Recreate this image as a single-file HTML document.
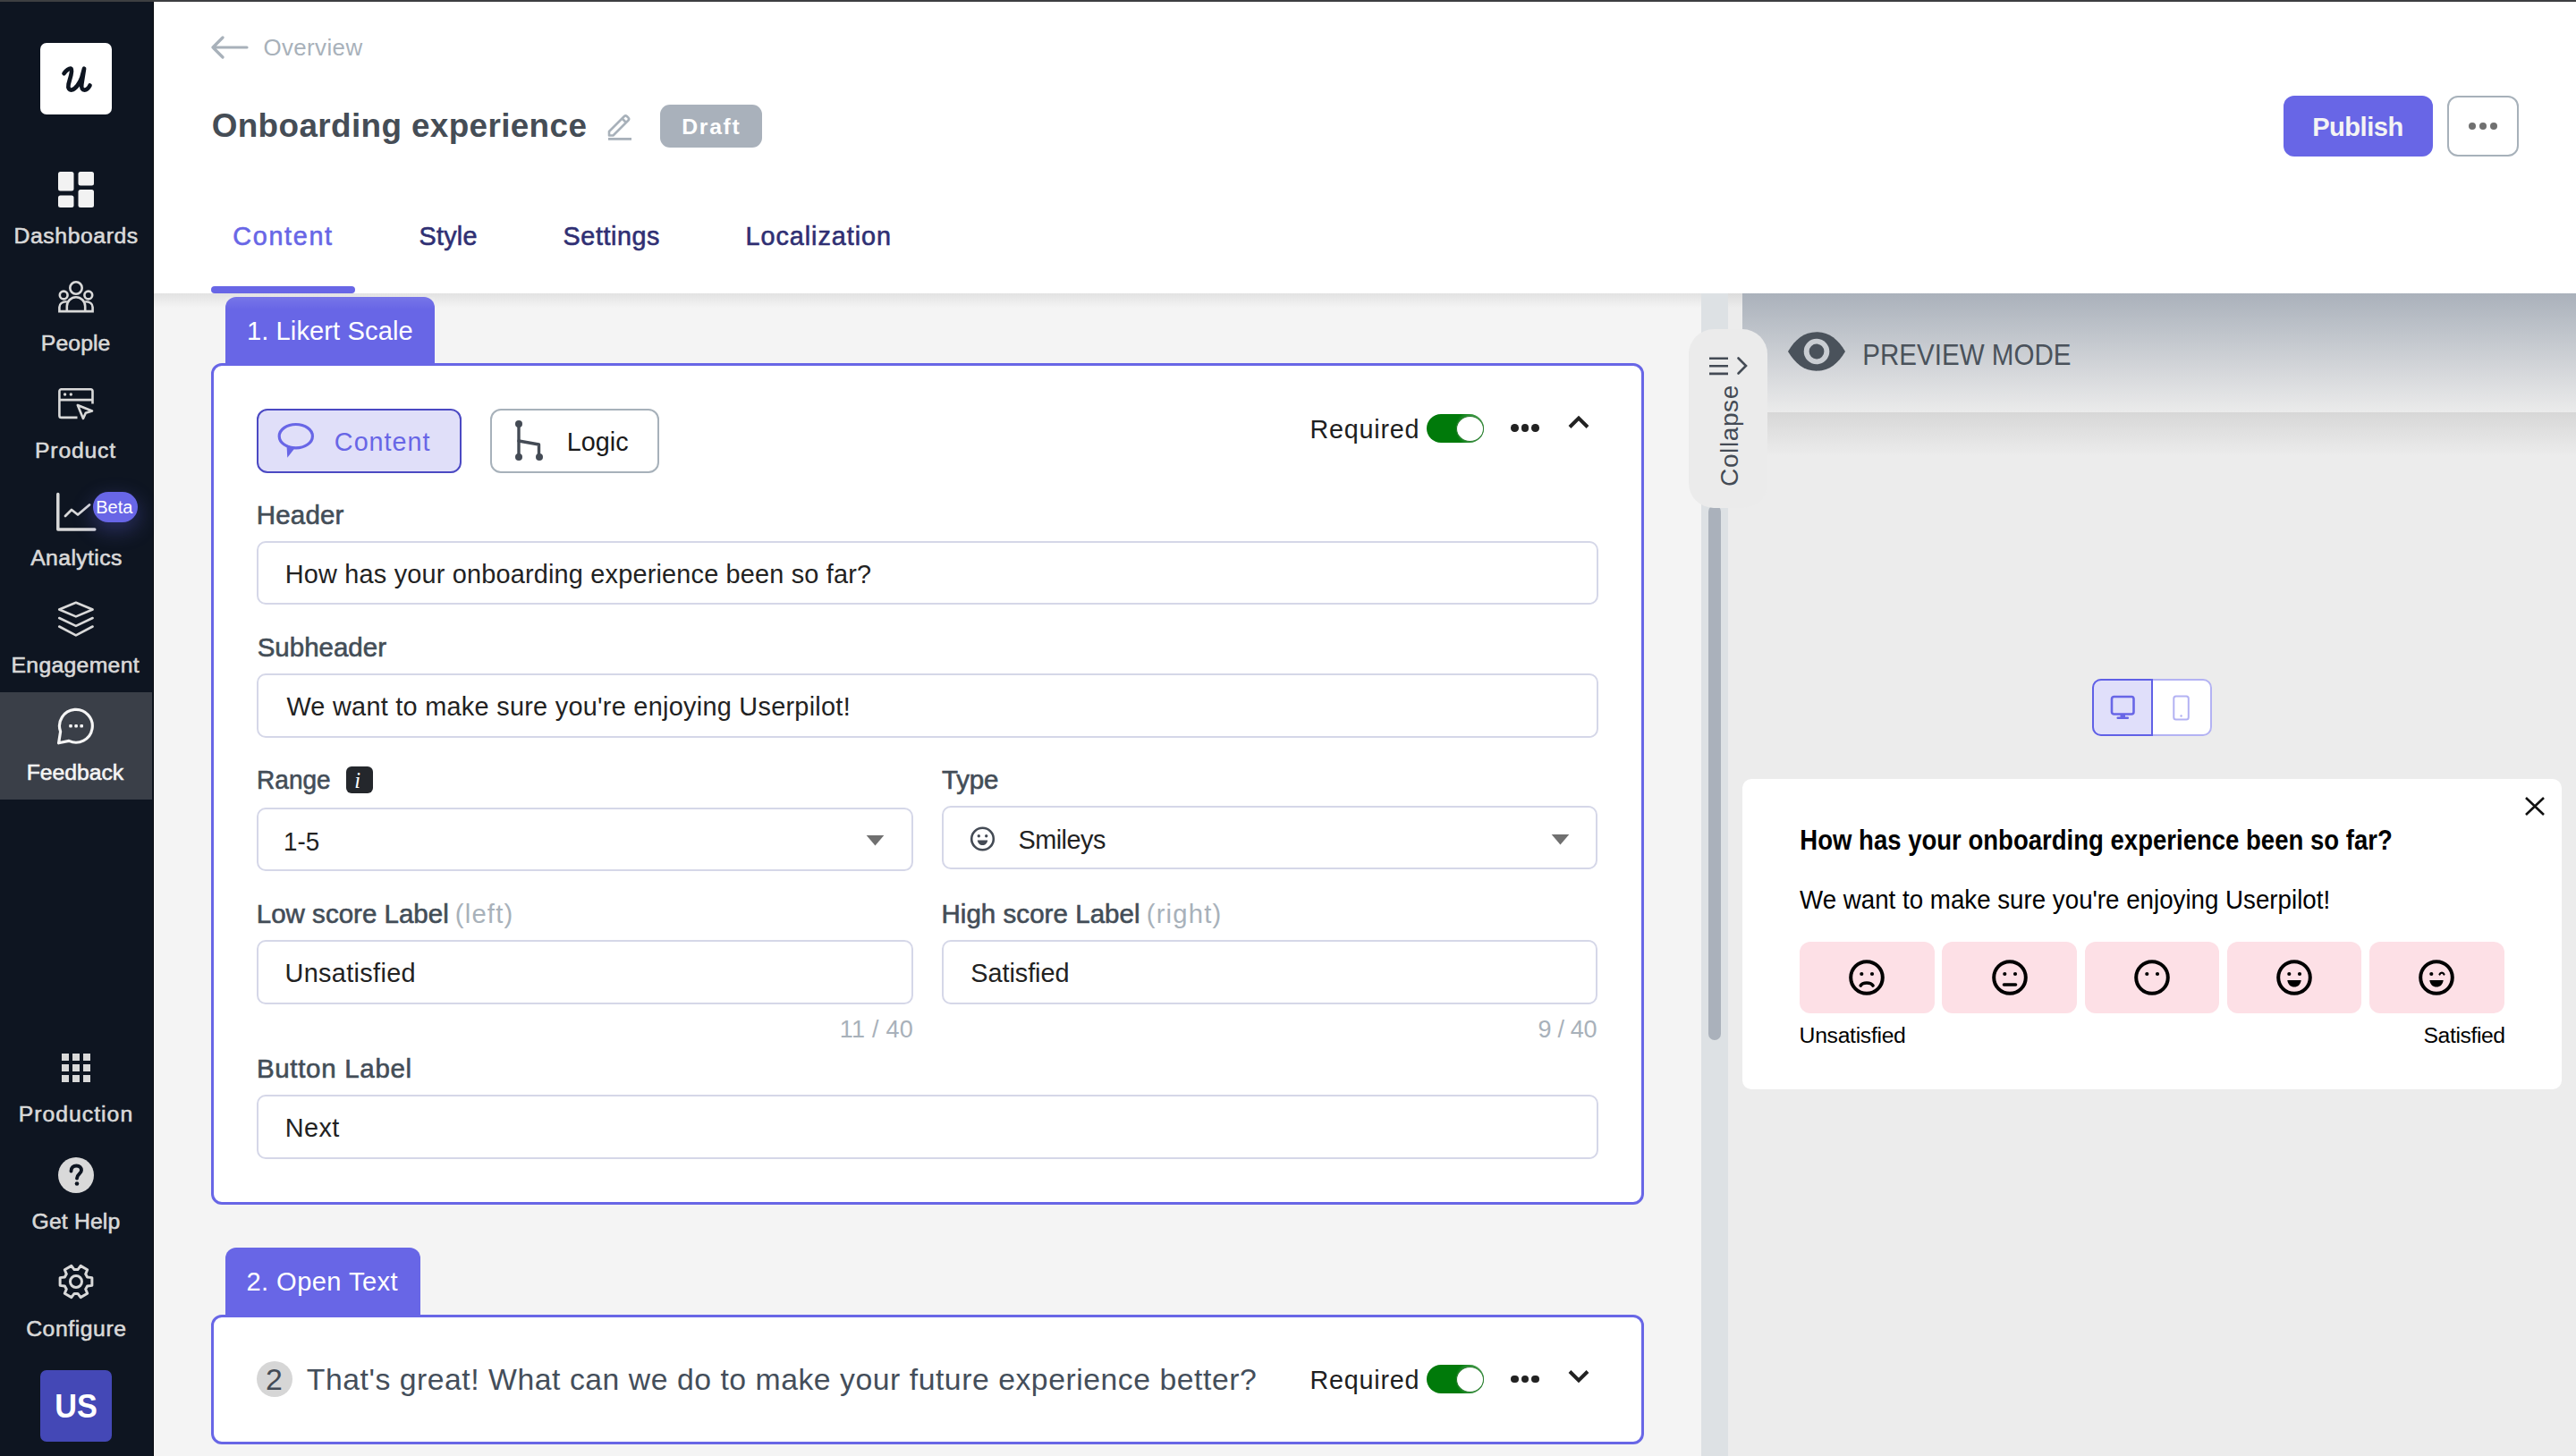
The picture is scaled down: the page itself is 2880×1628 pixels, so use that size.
<!DOCTYPE html>
<html><head><meta charset="utf-8"><style>
html,body{margin:0;padding:0;width:2880px;height:1628px;overflow:hidden;background:#f4f4f4}
.r{position:absolute;display:block}
.t{position:absolute;white-space:nowrap;line-height:1;font-family:"Liberation Sans",sans-serif}
</style></head><body>
<div class="r" style="left:0px;top:0px;width:2880px;height:1628px;background:#f4f4f4"></div>
<div class="r" style="left:1932px;top:328px;width:948px;height:1300px;background:#ececec"></div>
<div class="r" style="left:172px;top:2px;width:2708px;height:326px;background:#fff"></div>
<div class="r" style="left:0px;top:0px;width:2880px;height:2px;background:#3d3f41"></div>
<div class="r" style="left:0px;top:2px;width:172px;height:1626px;background:#0e1521"></div>
<div class="r" style="left:171px;top:2px;width:1px;height:1626px;background:#05080d"></div>
<div class="r" style="left:45px;top:48px;width:80px;height:80px;background:#fff;border-radius:7px"></div>
<svg class="r" style="left:45px;top:48px;" width="80" height="80" viewBox="0 0 80 80"><path transform="translate(40.8 40.6) scale(0.92) translate(-40.5 -40)" d="M25 33 C 27.5 29.5, 30.5 27, 33 27 C 35 27.5, 34.5 31, 33.5 35 L 30.5 46 C 29.5 51, 31.5 53.5, 34.5 53 C 39 52, 44 45, 46.5 38 L 49.5 27 L 46.5 46 C 45.8 51, 47.5 53, 50 53 C 52.5 53, 55 50.5, 56.5 47.5" fill="none" stroke="#0e1521" stroke-width="5.1" stroke-linecap="round" stroke-linejoin="round"/></svg>
<svg class="r" style="left:65px;top:192px;" width="40" height="40" viewBox="0 0 40 40"><rect x="0" y="0" width="17.5" height="21.5" rx="2.5" fill="#f2f2f2"/><rect x="0" y="26.5" width="17.5" height="13.5" rx="2.5" fill="#f2f2f2"/><rect x="22.5" y="0" width="17.5" height="15.5" rx="2.5" fill="#f2f2f2"/><rect x="22.5" y="20" width="17.5" height="20" rx="2.5" fill="#f2f2f2"/></svg>
<svg class="r" style="left:63px;top:312px;" width="44" height="40" viewBox="0 0 44 40"><g fill="none" stroke="#d9d9d9" stroke-width="2.6"><circle cx="22" cy="10" r="6.7"/><circle cx="8.2" cy="18" r="4.4"/><circle cx="35.8" cy="18" r="4.4"/><path d="M11.8 36 V30.5 A10.2 10.2 0 0 1 32.2 30.5 V36"/><path d="M11.8 25.3 C 6.5 25.3, 3.4 28, 3.4 31.5 V36.1 H40.6 V31.5 C 40.6 28, 37.5 25.3, 32.2 25.3"/></g></svg>
<svg class="r" style="left:63px;top:432px;" width="44" height="40" viewBox="0 0 44 40"><g fill="none" stroke="#d9d9d9" stroke-width="2.6" stroke-linejoin="round"><path d="M23.5 34.9 H5.6 a2.2 2.2 0 0 1 -2.2 -2.2 V5.5 a2.2 2.2 0 0 1 2.2 -2.2 H38.3 a2.2 2.2 0 0 1 2.2 2.2 V19.5"/><path d="M3.4 15.1 H40.5"/><path d="M23.8 21 L40 27.5 L32.8 29.8 L30 36 Z"/></g><circle cx="9.6" cy="9" r="1.7" fill="#d9d9d9"/><circle cx="16.3" cy="9" r="1.7" fill="#d9d9d9"/></svg>
<svg class="r" style="left:60px;top:548px;" width="50" height="49" viewBox="0 0 50 49"><g fill="none" stroke="#d9d9d9" stroke-linecap="round" stroke-linejoin="round"><path d="M4.8 4.5 V44 H45.8" stroke-width="3.5"/><path d="M13 29 L20 22 L27 27.5 L40 16.5" stroke-width="2.8"/></g></svg>
<div class="r" style="left:104px;top:550px;width:50px;height:34px;background:#6866e6;border-radius:17px;box-shadow:0 8px 22px 2px rgba(104,102,230,0.30)"></div>
<div class="t" style="left:107.16px;top:557.00px;font-size:20.000px;font-weight:400;color:#fff;letter-spacing:0.027px;">Beta</div>
<svg class="r" style="left:63px;top:670px;" width="44" height="44" viewBox="0 0 44 44"><g fill="none" stroke="#d9d9d9" stroke-width="2.6" stroke-linejoin="round" stroke-linecap="round"><path d="M3.2 11.5 L21.9 3.7 L40.6 11.5 L21.9 19.4 Z"/><path d="M3.2 21 L21.9 29.9 L40.6 21"/><path d="M3.2 30.5 L21.9 40.4 L40.6 30.5"/></g></svg>
<div class="r" style="left:0px;top:774px;width:170px;height:120px;background:#3a3f48"></div>
<svg class="r" style="left:63px;top:790px;" width="44" height="44" viewBox="0 0 44 44"><path d="M4.6 28 L2.6 40.8 L14.1 38.4 A18.4 18.4 0 1 0 4.6 28 Z" fill="none" stroke="#f5f5f5" stroke-width="3.2" stroke-linejoin="round"/><rect x="14.2" y="19.9" width="3.6" height="3.6" rx="1" fill="#f5f5f5"/><rect x="20.3" y="19.9" width="3.6" height="3.6" rx="1" fill="#f5f5f5"/><rect x="26.4" y="19.9" width="3.6" height="3.6" rx="1" fill="#f5f5f5"/></svg>
<svg class="r" style="left:69px;top:1178px;" width="32" height="32" viewBox="0 0 32 32"><rect x="0" y="0" width="8" height="8" fill="#d9d9d9"/><rect x="12" y="0" width="8" height="8" fill="#d9d9d9"/><rect x="24" y="0" width="8" height="8" fill="#d9d9d9"/><rect x="0" y="12" width="8" height="8" fill="#d9d9d9"/><rect x="12" y="12" width="8" height="8" fill="#d9d9d9"/><rect x="24" y="12" width="8" height="8" fill="#d9d9d9"/><rect x="0" y="24" width="8" height="8" fill="#d9d9d9"/><rect x="12" y="24" width="8" height="8" fill="#d9d9d9"/><rect x="24" y="24" width="8" height="8" fill="#d9d9d9"/></svg>
<svg class="r" style="left:65px;top:1294px;" width="40" height="40" viewBox="0 0 40 40"><circle cx="20" cy="20" r="20" fill="#d9d9d9"/><path d="M14.5 15.5 C 14.5 11.5, 17 9.5, 20.5 9.5 C 24 9.5, 26 11.8, 26 14.5 C 26 18.5, 21 19, 21 23.5" fill="none" stroke="#0e1521" stroke-width="3.9" stroke-linecap="round"/><circle cx="21" cy="29.5" r="2.3" fill="#0e1521"/></svg>
<svg class="r" style="left:65px;top:1413px;" width="40" height="40" viewBox="0 0 40 40"><g transform="translate(20,20)"><path fill="none" stroke="#d9d9d9" stroke-width="3" stroke-linejoin="round" d="M12.63 -5.04 L17.87 -4.37 L17.87 4.37 L12.63 5.04 L10.68 8.42 L12.72 13.29 L5.15 17.67 L1.95 13.46 L-1.95 13.46 L-5.15 17.67 L-12.72 13.29 L-10.68 8.42 L-12.63 5.04 L-17.87 4.37 L-17.87 -4.37 L-12.63 -5.04 L-10.68 -8.42 L-12.72 -13.29 L-5.15 -17.67 L-1.95 -13.46 L1.95 -13.46 L5.15 -17.67 L12.72 -13.29 L10.68 -8.42 Z"/><circle r="6.5" fill="none" stroke="#d9d9d9" stroke-width="3"/></g></svg>
<div class="r" style="left:45px;top:1532px;width:80px;height:80px;background:#4448b6;border-radius:7px"></div>
<div class="t" style="left:61.09px;top:1555.00px;font-size:36.750px;font-weight:700;color:#fff;letter-spacing:0.000px;transform:scaleX(0.9323);transform-origin:2.21px 0;">US</div>
<div class="t" style="left:15.57px;top:252.00px;font-size:24.750px;font-weight:400;color:#d9d9d9;letter-spacing:0.574px;-webkit-text-stroke:0.6px #d9d9d9;">Dashboards</div>
<div class="t" style="left:45.87px;top:372.00px;font-size:24.750px;font-weight:400;color:#d9d9d9;letter-spacing:0.089px;-webkit-text-stroke:0.6px #d9d9d9;">People</div>
<div class="t" style="left:39.07px;top:492.00px;font-size:24.750px;font-weight:400;color:#d9d9d9;letter-spacing:0.802px;-webkit-text-stroke:0.6px #d9d9d9;">Product</div>
<div class="t" style="left:34.15px;top:612.00px;font-size:24.750px;font-weight:400;color:#d9d9d9;letter-spacing:0.402px;-webkit-text-stroke:0.6px #d9d9d9;">Analytics</div>
<div class="t" style="left:12.57px;top:732.00px;font-size:24.750px;font-weight:400;color:#d9d9d9;letter-spacing:0.294px;-webkit-text-stroke:0.6px #d9d9d9;">Engagement</div>
<div class="t" style="left:29.77px;top:852.00px;font-size:24.750px;font-weight:400;color:#f5f5f5;letter-spacing:-0.046px;-webkit-text-stroke:0.6px #f5f5f5;">Feedback</div>
<div class="t" style="left:20.67px;top:1234.00px;font-size:24.750px;font-weight:400;color:#d9d9d9;letter-spacing:1.020px;-webkit-text-stroke:0.6px #d9d9d9;">Production</div>
<div class="t" style="left:35.56px;top:1354.00px;font-size:24.750px;font-weight:400;color:#d9d9d9;letter-spacing:0.141px;-webkit-text-stroke:0.6px #d9d9d9;">Get Help</div>
<div class="t" style="left:29.16px;top:1474.00px;font-size:24.750px;font-weight:400;color:#d9d9d9;letter-spacing:0.564px;-webkit-text-stroke:0.6px #d9d9d9;">Configure</div>
<svg class="r" style="left:234px;top:38px;" width="46" height="30" viewBox="0 0 46 30"><path d="M42 15 H4 M15 4 L4 15 L15 26" fill="none" stroke="#a8b1ba" stroke-width="3.2" stroke-linecap="round" stroke-linejoin="round"/></svg>
<div class="t" style="left:294.38px;top:41.00px;font-size:25.875px;font-weight:400;color:#a8b1ba;letter-spacing:0.417px;">Overview</div>
<div class="t" style="left:236.69px;top:123.00px;font-size:36.875px;font-weight:700;color:#454d56;letter-spacing:0.375px;">Onboarding experience</div>
<svg class="r" style="left:678px;top:124px;" width="30" height="34" viewBox="0 0 30 34"><g fill="none" stroke="#a8b1ba" stroke-width="2.6" stroke-linejoin="round"><path d="M3 23 L20 6 a2 2 0 0 1 2.8 0 L24.5 7.7 a2 2 0 0 1 0 2.8 L7.5 27.5 H3 Z"/><path d="M17.5 8.5 L22.5 13.5"/></g><rect x="2" y="30" width="26" height="2.8" fill="#a8b1ba"/></svg>
<div class="r" style="left:738px;top:117px;width:114px;height:48px;background:#a9b1bb;border-radius:11px"></div>
<div class="t" style="left:762.27px;top:130.00px;font-size:24.750px;font-weight:700;color:#fff;letter-spacing:1.691px;">Draft</div>
<div class="r" style="left:2553px;top:107px;width:167px;height:68px;background:#6866e6;border-radius:12px"></div>
<div class="t" style="left:2585.18px;top:128.00px;font-size:29.125px;font-weight:700;color:#f4f4f4;letter-spacing:-0.512px;">Publish</div>
<div class="r" style="left:2736px;top:107px;width:80px;height:68px;box-sizing:border-box;border:2.5px solid #a7b1ba;border-radius:12px;background:#fff"></div>
<div class="r" style="left:2760px;top:137px;width:8px;height:8px;background:#707070;border-radius:50%"></div>
<div class="r" style="left:2772px;top:137px;width:8px;height:8px;background:#707070;border-radius:50%"></div>
<div class="r" style="left:2784px;top:137px;width:8px;height:8px;background:#707070;border-radius:50%"></div>
<div class="t" style="left:260.36px;top:250.00px;font-size:28.750px;font-weight:400;color:#6866e6;letter-spacing:1.671px;-webkit-text-stroke:0.6px #6866e6;">Content</div>
<div class="t" style="left:468.61px;top:250.00px;font-size:28.750px;font-weight:400;color:#2f2f73;letter-spacing:0.212px;-webkit-text-stroke:0.6px #2f2f73;">Style</div>
<div class="t" style="left:629.61px;top:250.00px;font-size:28.750px;font-weight:400;color:#2f2f73;letter-spacing:0.565px;-webkit-text-stroke:0.6px #2f2f73;">Settings</div>
<div class="t" style="left:833.54px;top:250.00px;font-size:28.750px;font-weight:400;color:#2f2f73;letter-spacing:0.961px;-webkit-text-stroke:0.6px #2f2f73;">Localization</div>
<div class="r" style="left:236px;top:320px;width:161px;height:8px;background:#6866e6;border-radius:4px"></div>
<div class="r" style="left:172px;top:328px;width:1760px;height:16px;background:linear-gradient(#e2e2e2,rgba(244,244,244,0))"></div>
<div class="r" style="left:1932px;top:328px;width:16px;height:16px;background:linear-gradient(#dcdcdc,rgba(236,236,236,0))"></div>
<div class="r" style="left:252px;top:332px;width:234px;height:80px;background:#6866e6;border-radius:12px 12px 0 0"></div>
<div class="r" style="left:252px;top:332px;width:234px;height:14px;background:linear-gradient(rgba(255,255,255,0.10),rgba(255,255,255,0))"></div>
<div class="t" style="left:275.89px;top:356.00px;font-size:29.125px;font-weight:400;color:#fff;letter-spacing:0.097px;">1. Likert Scale</div>
<div class="r" style="left:236px;top:406px;width:1602px;height:941px;box-sizing:border-box;border:3px solid #6866e6;border-radius:12px;background:#fff"></div>
<div class="r" style="left:287px;top:457px;width:229px;height:72px;box-sizing:border-box;border:2px solid #4b49c3;border-radius:12px;background:#e0dff9"></div>
<svg class="r" style="left:308px;top:470px;" width="46" height="46" viewBox="0 0 46 46"><ellipse cx="22.8" cy="17.7" rx="18.6" ry="13.2" fill="none" stroke="#6866e6" stroke-width="3.2"/><path d="M12.5 27.5 L13.3 41.8 L22 30.5 Z" fill="#6866e6"/></svg>
<div class="t" style="left:373.86px;top:480.00px;font-size:28.750px;font-weight:400;color:#6866e6;letter-spacing:1.005px;">Content</div>
<div class="r" style="left:548px;top:457px;width:189px;height:72px;box-sizing:border-box;border:2px solid #a7b1ba;border-radius:12px;background:#fff"></div>
<svg class="r" style="left:572px;top:467px;" width="38" height="52" viewBox="0 0 38 52"><g stroke="#444b55" stroke-width="3.4" fill="none" stroke-linecap="round" stroke-linejoin="round"><path d="M8 7 V44"/><path d="M8 26 L30.5 30 V44"/></g><circle cx="8" cy="7" r="4" fill="#444b55"/><circle cx="8" cy="44" r="4" fill="#444b55"/><circle cx="31" cy="44" r="4" fill="#444b55"/></svg>
<div class="t" style="left:633.64px;top:480.00px;font-size:28.750px;font-weight:400;color:#1a1a1a;letter-spacing:0.091px;">Logic</div>
<div class="t" style="left:1464.44px;top:466.00px;font-size:28.750px;font-weight:400;color:#1e1e1e;letter-spacing:0.776px;">Required</div>
<div class="r" style="left:1595px;top:463px;width:64px;height:32px;background:#007a0a;border-radius:16px"></div>
<div class="r" style="left:1619px;top:463px;width:40px;height:32px;background:radial-gradient(circle at 75% 50%, rgba(255,255,255,0.35) 30%, rgba(255,255,255,0) 65%);border-radius:0 16px 16px 0"></div>
<div class="r" style="left:1628px;top:464.5px;width:31px;height:29.0px;box-sizing:border-box;border:1.8px solid #2a7d2f;border-radius:50%;background:#fff"></div>
<div class="r" style="left:1689.2px;top:474.3px;width:8.6px;height:8.6px;border-radius:50%;background:#222"></div>
<div class="r" style="left:1700.7px;top:474.3px;width:8.6px;height:8.6px;border-radius:50%;background:#222"></div>
<div class="r" style="left:1712.2px;top:474.3px;width:8.6px;height:8.6px;border-radius:50%;background:#222"></div>
<svg class="r" style="left:1749px;top:459px;" width="32" height="27" viewBox="0 0 32 27"><path d="M6 18.5 L16 8.5 L26 18.5" fill="none" stroke="#222" stroke-width="4"/></svg>
<div class="t" style="left:286.78px;top:561.00px;font-size:29.500px;font-weight:400;color:#434d57;letter-spacing:0.166px;-webkit-text-stroke:0.6px #434d57;">Header</div>
<div class="r" style="left:287px;top:605.3px;width:1499.6px;height:71.0px;box-sizing:border-box;border:2px solid #d5d7e8;border-radius:10px;background:#fff"></div>
<div class="t" style="left:318.83px;top:628.00px;font-size:28.875px;font-weight:400;color:#222;letter-spacing:0.190px;">How has your onboarding experience been so far?</div>
<div class="t" style="left:287.67px;top:709.00px;font-size:29.500px;font-weight:400;color:#434d57;letter-spacing:-0.005px;-webkit-text-stroke:0.6px #434d57;">Subheader</div>
<div class="r" style="left:287px;top:753.4px;width:1499.6px;height:71.20000000000005px;box-sizing:border-box;border:2px solid #d5d7e8;border-radius:10px;background:#fff"></div>
<div class="t" style="left:320.38px;top:776.00px;font-size:28.875px;font-weight:400;color:#222;letter-spacing:0.273px;">We want to make sure you&#x27;re enjoying Userpilot!</div>
<div class="t" style="left:286.78px;top:857.00px;font-size:29.500px;font-weight:400;color:#434d57;letter-spacing:0.000px;-webkit-text-stroke:0.6px #434d57;transform:scaleX(0.9493);transform-origin:2.42px 0;">Range</div>
<div class="r" style="left:387px;top:857px;width:30px;height:30px;background:#24272c;border-radius:6px"></div>
<div class="t" style="left:396.37px;top:861.00px;font-size:24.750px;font-weight:400;color:#fff;letter-spacing:0.000px;font-family:'Liberation Serif',serif;font-style:italic">i</div>
<div class="r" style="left:287px;top:903.2px;width:733.6px;height:71.29999999999995px;box-sizing:border-box;border:2px solid #d5d7e8;border-radius:10px;background:#fff"></div>
<div class="t" style="left:317.41px;top:927.00px;font-size:28.875px;font-weight:400;color:#222;letter-spacing:0.000px;transform:scaleX(0.9623);transform-origin:2.19px 0;">1-5</div>
<svg class="r" style="left:968px;top:933px;" width="22" height="14" viewBox="0 0 22 14"><path d="M0.7 1 H20.3 L10.5 12.6 Z" fill="#707070"/></svg>
<div class="t" style="left:1052.95px;top:857.00px;font-size:29.500px;font-weight:400;color:#434d57;letter-spacing:-0.136px;-webkit-text-stroke:0.6px #434d57;">Type</div>
<div class="r" style="left:1053.3px;top:901.4px;width:732.7px;height:71.0px;box-sizing:border-box;border:2px solid #d5d7e8;border-radius:10px;background:#fff"></div>
<svg class="r" style="left:1083px;top:924px;" width="32" height="28" viewBox="0 0 32 28"><circle cx="15.5" cy="14" r="12.3" fill="none" stroke="#444b55" stroke-width="2.6"/><circle cx="11.3" cy="10.8" r="1.7" fill="#444b55"/><circle cx="19.7" cy="10.8" r="1.7" fill="#444b55"/><path d="M9.8 15.5 H21.2 C 20.8 19, 18.5 21, 15.5 21 C 12.5 21, 10.2 19, 9.8 15.5 Z" fill="#444b55"/></svg>
<div class="t" style="left:1138.40px;top:925.00px;font-size:28.875px;font-weight:400;color:#222;letter-spacing:-0.509px;">Smileys</div>
<svg class="r" style="left:1734px;top:932px;" width="22" height="14" viewBox="0 0 22 14"><path d="M0.7 1 H20.3 L10.5 12.6 Z" fill="#707070"/></svg>
<div class="t" style="left:286.78px;top:1007.00px;font-size:29.500px;font-weight:400;color:#434d57;letter-spacing:0.011px;-webkit-text-stroke:0.6px #434d57;">Low score Label</div>
<div class="t" style="left:508.79px;top:1008.00px;font-size:29.250px;font-weight:400;color:#a8b1ba;letter-spacing:1.185px;">(left)</div>
<div class="r" style="left:287px;top:1051.1px;width:733.6px;height:71.70000000000005px;box-sizing:border-box;border:2px solid #d5d7e8;border-radius:10px;background:#fff"></div>
<div class="t" style="left:318.58px;top:1074.00px;font-size:28.875px;font-weight:400;color:#222;letter-spacing:0.323px;">Unsatisfied</div>
<div class="t" style="left:1052.48px;top:1007.00px;font-size:29.500px;font-weight:400;color:#434d57;letter-spacing:0.047px;-webkit-text-stroke:0.6px #434d57;">High score Label</div>
<div class="t" style="left:1281.79px;top:1008.00px;font-size:29.250px;font-weight:400;color:#a8b1ba;letter-spacing:1.176px;">(right)</div>
<div class="r" style="left:1053.3px;top:1051.1px;width:732.7px;height:71.70000000000005px;box-sizing:border-box;border:2px solid #d5d7e8;border-radius:10px;background:#fff"></div>
<div class="t" style="left:1085.30px;top:1074.00px;font-size:28.875px;font-weight:400;color:#222;letter-spacing:-0.061px;">Satisfied</div>
<div class="t" style="left:938.85px;top:1138.00px;font-size:27.000px;font-weight:400;color:#a8b1ba;letter-spacing:0.218px;">11 / 40</div>
<div class="t" style="left:1719.46px;top:1138.00px;font-size:27.000px;font-weight:400;color:#a8b1ba;letter-spacing:-0.297px;">9 / 40</div>
<div class="t" style="left:286.88px;top:1180.00px;font-size:29.500px;font-weight:400;color:#434d57;letter-spacing:0.690px;-webkit-text-stroke:0.6px #434d57;">Button Label</div>
<div class="r" style="left:287px;top:1224.3px;width:1499.6px;height:71.29999999999995px;box-sizing:border-box;border:2px solid #d5d7e8;border-radius:10px;background:#fff"></div>
<div class="t" style="left:318.63px;top:1247.00px;font-size:28.875px;font-weight:400;color:#222;letter-spacing:0.468px;">Next</div>
<div class="r" style="left:252px;top:1395px;width:218px;height:80px;background:#6866e6;border-radius:12px 12px 0 0"></div>
<div class="t" style="left:275.44px;top:1419.00px;font-size:29.125px;font-weight:400;color:#fff;letter-spacing:0.422px;">2. Open Text</div>
<div class="r" style="left:236px;top:1470px;width:1602px;height:145px;box-sizing:border-box;border:3px solid #6866e6;border-radius:12px;background:#fff"></div>
<div class="r" style="left:287px;top:1522px;width:40px;height:40px;background:#d6d6d6;border-radius:50%"></div>
<div class="t" style="left:297.11px;top:1526.00px;font-size:33.875px;font-weight:400;color:#444b55;letter-spacing:0.000px;">2</div>
<div class="t" style="left:342.76px;top:1526.00px;font-size:33.750px;font-weight:400;color:#444e5a;letter-spacing:0.530px;">That&#x27;s great! What can we do to make your future experience better?</div>
<div class="t" style="left:1464.44px;top:1529.00px;font-size:28.750px;font-weight:400;color:#1e1e1e;letter-spacing:0.776px;">Required</div>
<div class="r" style="left:1595px;top:1526px;width:64px;height:32px;background:#007a0a;border-radius:16px"></div>
<div class="r" style="left:1619px;top:1526px;width:40px;height:32px;background:radial-gradient(circle at 75% 50%, rgba(255,255,255,0.35) 30%, rgba(255,255,255,0) 65%);border-radius:0 16px 16px 0"></div>
<div class="r" style="left:1628px;top:1527.5px;width:31px;height:29.0px;box-sizing:border-box;border:1.8px solid #2a7d2f;border-radius:50%;background:#fff"></div>
<div class="r" style="left:1689.2px;top:1537.7px;width:8.6px;height:8.6px;border-radius:50%;background:#222"></div>
<div class="r" style="left:1700.7px;top:1537.7px;width:8.6px;height:8.6px;border-radius:50%;background:#222"></div>
<div class="r" style="left:1712.2px;top:1537.7px;width:8.6px;height:8.6px;border-radius:50%;background:#222"></div>
<svg class="r" style="left:1749px;top:1524px;" width="32" height="27" viewBox="0 0 32 27"><path d="M6 9.5 L16 19.5 L26 9.5" fill="none" stroke="#222" stroke-width="4"/></svg>
<div class="r" style="left:1902px;top:328px;width:30px;height:1300px;background:#dde1e4"></div>
<div class="r" style="left:1910px;top:565px;width:14px;height:598px;background:#aab1bb;border-radius:7px"></div>
<div class="r" style="left:1948px;top:328px;width:932px;height:133px;background:linear-gradient(#aab1bb,#ebebeb)"></div>
<div class="r" style="left:1932px;top:461px;width:948px;height:49px;background:linear-gradient(#d7d7d7,#ececec)"></div>
<svg class="r" style="left:1997px;top:369px;" width="68" height="48" viewBox="0 0 68 48"><path d="M2 24 C 10 10.5, 20 2.3, 34 2.3 C 48 2.3, 58 10.5, 66 24 C 58 37.5, 48 45.7, 34 45.7 C 20 45.7, 10 37.5, 2 24 Z" fill="#4a525b"/><circle cx="34" cy="24" r="14.3" fill="#c9cdd2"/><circle cx="34" cy="24" r="8.4" fill="#4a525b"/></svg>
<div class="t" style="left:2082.27px;top:380.00px;font-size:33.250px;font-weight:400;color:#4a525b;letter-spacing:0.000px;transform:scaleX(0.8888);transform-origin:2.73px 0;">PREVIEW MODE</div>
<div class="r" style="left:1888px;top:368px;width:88px;height:200px;background:#ebebeb;border-radius:28px"></div>
<svg class="r" style="left:1908px;top:396px;" width="48" height="26" viewBox="0 0 48 26"><g stroke="#444b55" stroke-width="2.6" fill="none"><path d="M3 4.7 H24 M3 13.3 H24 M3 21.9 H24"/><path d="M35.5 4.5 L44 13 L35.5 21.5" stroke-linecap="round"/></g></svg>
<div class="t" style="left:1933.5px;top:487px;font-size:28px;color:#444b55;letter-spacing:0.6px;transform:translate(-50%,-50%) rotate(-90deg);transform-origin:50% 50%">Collapse</div>
<div class="r" style="left:2339px;top:759px;width:134px;height:64px;box-sizing:border-box;border:2px solid #b3b2f3;border-radius:10px;background:#fff"></div>
<div class="r" style="left:2339px;top:759px;width:68px;height:64px;box-sizing:border-box;border:2.5px solid #6060e6;border-radius:10px 0 0 10px;background:#e0dffa"></div>
<svg class="r" style="left:2358px;top:776px;" width="30" height="30" viewBox="0 0 30 30"><rect x="3" y="3" width="24.5" height="19.5" rx="2.5" fill="none" stroke="#6866e6" stroke-width="2.6"/><rect x="12.5" y="22" width="5.5" height="4" fill="#6866e6"/><rect x="8.5" y="25.5" width="13.5" height="2.6" rx="1" fill="#6866e6"/></svg>
<svg class="r" style="left:2428px;top:776px;" width="22" height="32" viewBox="0 0 22 32"><rect x="2.3" y="2.5" width="16.5" height="26" rx="2.5" fill="none" stroke="#b3b2f3" stroke-width="2"/><circle cx="10.6" cy="24.5" r="1.2" fill="#b3b2f3"/></svg>
<div class="r" style="left:1948px;top:871px;width:916px;height:347px;background:#fff;border-radius:10px"></div>
<svg class="r" style="left:2820px;top:888px;" width="28" height="27" viewBox="0 0 28 27"><path d="M4 4 L24 23 M24 4 L4 23" stroke="#111" stroke-width="2.6" fill="none"/></svg>
<div class="t" style="left:2011.79px;top:923.00px;font-size:32.000px;font-weight:700;color:#000;letter-spacing:0.000px;transform:scaleX(0.8604);transform-origin:2.11px 0;">How has your onboarding experience been so far?</div>
<div class="t" style="left:2012.38px;top:991.00px;font-size:29.500px;font-weight:400;color:#000;letter-spacing:0.000px;transform:scaleX(0.9393);transform-origin:0.12px 0;">We want to make sure you&#x27;re enjoying Userpilot!</div>
<div class="r" style="left:2012.00px;top:1053px;width:150.5px;height:80px;background:#fde0e6;border-radius:12px"></div>
<svg class="r" style="left:2067.25px;top:1073px" width="40" height="40" viewBox="0 0 40 40"><circle cx="20" cy="20" r="17.8" fill="none" stroke="#000" stroke-width="4"/><circle cx="14.3" cy="16" r="2.1"/><circle cx="26" cy="16" r="2.1"/><path d="M13.2 29 C 15.5 25, 24.5 25, 27 29" fill="none" stroke="#000" stroke-width="3.6" stroke-linecap="round"/></svg>
<div class="r" style="left:2171.25px;top:1053px;width:150.5px;height:80px;background:#fde0e6;border-radius:12px"></div>
<svg class="r" style="left:2226.50px;top:1073px" width="40" height="40" viewBox="0 0 40 40"><circle cx="20" cy="20" r="17.8" fill="none" stroke="#000" stroke-width="4"/><circle cx="14.3" cy="16" r="2.1"/><circle cx="26" cy="16" r="2.1"/><path d="M13.5 28 H26.5" fill="none" stroke="#000" stroke-width="3.6" stroke-linecap="round"/></svg>
<div class="r" style="left:2330.50px;top:1053px;width:150.5px;height:80px;background:#fde0e6;border-radius:12px"></div>
<svg class="r" style="left:2385.75px;top:1073px" width="40" height="40" viewBox="0 0 40 40"><circle cx="20" cy="20" r="17.8" fill="none" stroke="#000" stroke-width="4"/><circle cx="14.3" cy="16" r="2.1"/><circle cx="26" cy="16" r="2.1"/></svg>
<div class="r" style="left:2489.75px;top:1053px;width:150.5px;height:80px;background:#fde0e6;border-radius:12px"></div>
<svg class="r" style="left:2545.00px;top:1073px" width="40" height="40" viewBox="0 0 40 40"><circle cx="20" cy="20" r="17.8" fill="none" stroke="#000" stroke-width="4"/><circle cx="14.3" cy="16" r="2.1"/><circle cx="26" cy="16" r="2.1"/><path d="M12.3 23 H27.7 C 27 28, 24 30.5, 20 30.5 C 16 30.5, 13 28, 12.3 23 Z"/></svg>
<div class="r" style="left:2649.00px;top:1053px;width:150.5px;height:80px;background:#fde0e6;border-radius:12px"></div>
<svg class="r" style="left:2704.25px;top:1073px" width="40" height="40" viewBox="0 0 40 40"><circle cx="20" cy="20" r="17.8" fill="none" stroke="#000" stroke-width="4"/><circle cx="14.3" cy="16" r="2.1"/><path d="M23.5 16.5 C 24.5 14, 27.5 14, 28.5 16.5" fill="none" stroke="#000" stroke-width="2.2" stroke-linecap="round"/><path d="M12.3 23 H27.7 C 27 28, 24 30.5, 20 30.5 C 16 30.5, 13 28, 12.3 23 Z"/></svg>
<div class="t" style="left:2011.59px;top:1146.00px;font-size:24.750px;font-weight:400;color:#000;letter-spacing:-0.315px;">Unsatisfied</div>
<div class="t" style="left:2709.49px;top:1146.00px;font-size:24.750px;font-weight:400;color:#000;letter-spacing:-0.415px;">Satisfied</div>
</body></html>
